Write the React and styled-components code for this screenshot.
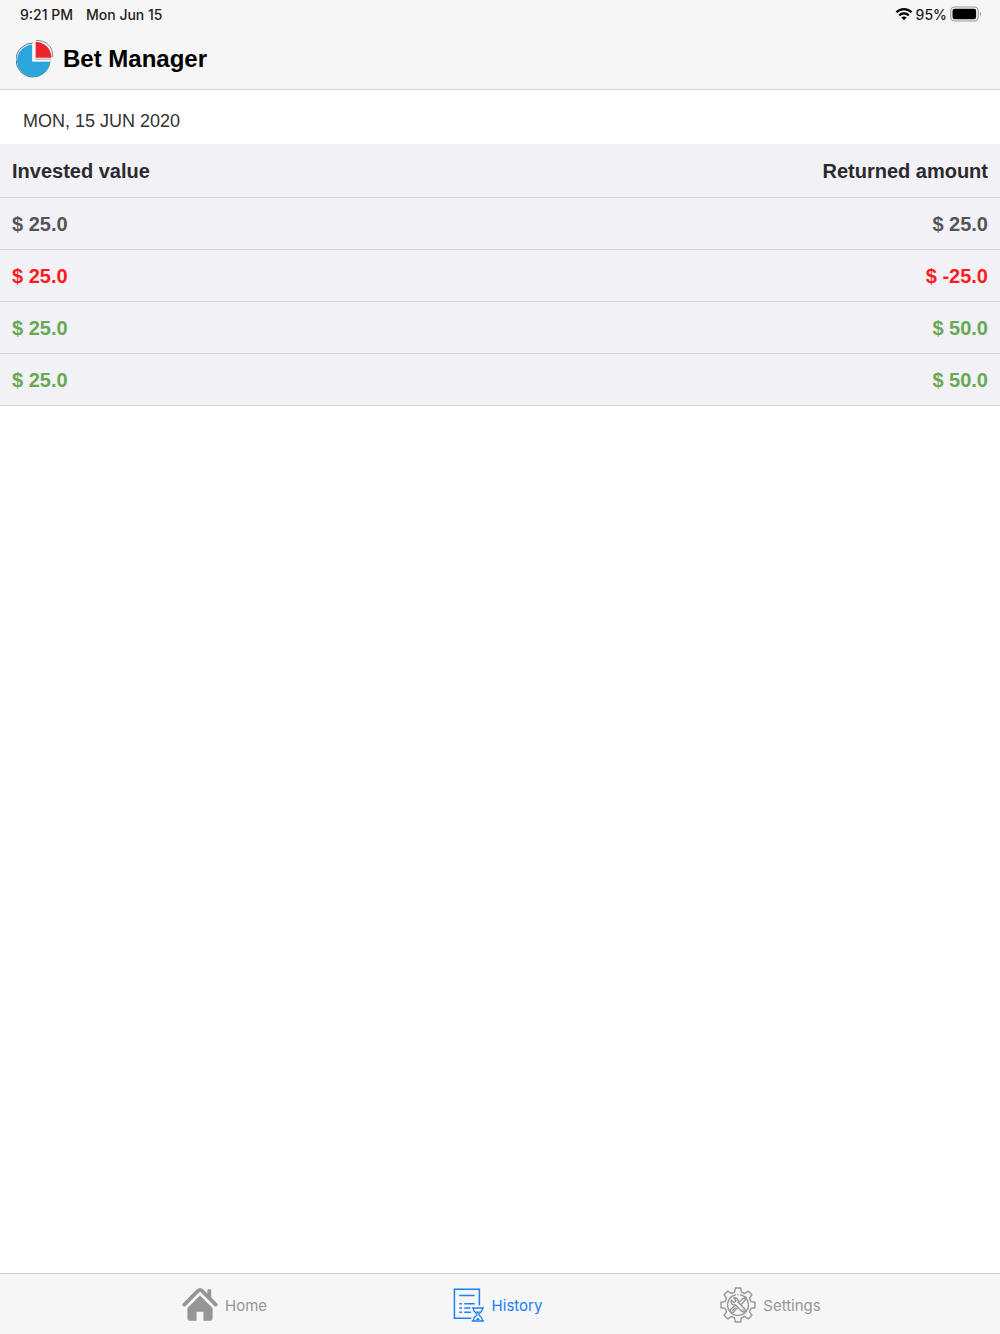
import React from 'react'
import styled, { createGlobalStyle } from 'styled-components';

const GlobalStyle = createGlobalStyle`
  * {
    box-sizing: border-box;
  }

  body {
    margin: 0;
    background: #ffffff;
    font-family: "Liberation Sans", Arial, sans-serif;
  }
`

const Page = styled.div`
  display: flex;
  flex-direction: column;
  min-height: 100vh;
`

const Header = styled.header`
  background: #f6f6f6;
  border-bottom: 1px solid #cfcdd0;
`

const StatusBar = styled.div`
  display: flex;
  justify-content: space-between;
  align-items: center;
  height: 28px;
  padding: 0 18px 0 20px;
  color: #1c1c1c;
  font-family: Inter, sans-serif;
  font-size: 14px;
  font-weight: 500;
`

const StatusGroup = styled.div`
  display: flex;
  align-items: center;
  gap: ${props => props.$gap}px;
`

const Brand = styled.div`
  display: flex;
  align-items: center;
  gap: 8px;
  height: 61px;
  padding: 0 16px;
`

const Title = styled.h1`
  margin: 0;
  color: #000000;
  font-size: 24px;
  line-height: 28px;
`

const Main = styled.main`
  flex: 1;
`

const DateHeading = styled.h2`
  margin: 0;
  padding: 19px 23px 11px;
  color: #333333;
  font-size: 18px;
  font-weight: 400;
  line-height: 24px;
  text-transform: uppercase;
`

const BetTable = styled.table`
  width: 100%;
  border-collapse: collapse;
  background: #f2f1f6;
  font-size: 20px;
  font-weight: 700;
  line-height: 24px;
`

const rowColors = {
  header: '#2b2b2d',
  even: '#555555',
  lost: '#fb1c20',
  won: '#68a953',
}

const Row = styled.tr`
  height: ${props => props.$kind === 'header' ? 53 : 52}px;
  color: ${props => rowColors[props.$kind]};
  border-bottom: 1px solid #d5d4d9;

  th, td {
    padding: 1px 12px 0;
    text-align: left;
  }

  th:last-child, td:last-child {
    text-align: right;
  }
`

const TabBar = styled.nav`
  display: flex;
  justify-content: center;
  height: 61px;
  padding-right: 5px;
  background: #f6f6f6;
  border-top: 1px solid #cfcdd0;
`

const Tab = styled.a`
  display: flex;
  flex: 0 1 273px;
  justify-content: center;
  align-items: center;
  gap: 7px;
  padding-top: 2px;
  color: ${props => props.$active ? '#1b7ff5' : '#969696'};
  font-family: Inter, sans-serif;
  font-size: 15px;
  text-decoration: none;
`

const WifiIcon = () => (
  <svg width="18" height="14" viewBox="0 0 18 14" fill="none" stroke="#000000" strokeWidth="2.2" aria-hidden="true">
    <path d="M1.4 5.3C5.6 1 12.4 1 16.6 5.3" />
    <path d="M4.2 8.4C6.9 5.7 11.1 5.7 13.8 8.4" />
    <path d="M6.4 10.6C7.9 9.2 10.1 9.2 11.6 10.6L9 13.2Z" fill="#000000" stroke="none" />
  </svg>
)

const BatteryIcon = () => (
  <svg width="32" height="16" viewBox="0 0 32 16" aria-hidden="true">
    <rect x="0.8" y="1" width="27.4" height="14" rx="4" fill="none" stroke="#999999" strokeWidth="1.1" />
    <rect x="2.5" y="2.8" width="23.6" height="10.4" rx="2.2" fill="#000000" />
    <path d="M30 5.8C31.6 6.6 31.6 9.4 30 10.2Z" fill="#999999" />
  </svg>
)

const Logo = () => (
  <svg width="39" height="40" viewBox="0 0 39 40" aria-hidden="true">
    <path d="M17 4A17 17 0 1 0 34 22" fill="none" stroke="#46636f" strokeWidth="0.9" />
    <path d="M17.2 5.4A16.3 16.3 0 1 0 33.6 22.2H17.2Z" fill="#2ca5df" />
    <path d="M17.2 4.5V21.6H34" fill="none" stroke="#ffffff" strokeWidth="2" />
    <path d="M19 20.2H35" stroke="#a5a5a5" strokeWidth="1" />
    <path d="M20 1.6C29 .8 36 7 36.6 14.5V18" fill="none" stroke="#777777" strokeWidth="0.9" />
    <path d="M19.6 3C28.5 2.8 35.3 9.7 35.5 18.8H19.6Z" fill="#ea252b" />
  </svg>
)

const HomeIcon = () => (
  <svg width="36" height="34" viewBox="0 0 36 34" fill="currentColor" aria-hidden="true">
    <path d="M2.3 16.6L15.6 3.2Q18 1 20.4 3.2L33.7 16.6" fill="none" stroke="currentColor" strokeWidth="3.8" strokeLinecap="round" />
    <path d="M25.4 2Q25.4 1.3 26.1 1.3H28.5Q29.2 1.3 29.2 2V12L25.4 8.2Z" />
    <path d="M18 7.6L30.6 20V30.4Q30.6 32.8 28.2 32.8H21.4V23.7H14.6V32.8H7.8Q5.4 32.8 5.4 30.4V20Z" />
  </svg>
)

const HistoryIcon = () => (
  <svg width="32" height="34" viewBox="0 0 32 34" fill="none" stroke="currentColor" strokeWidth="1.5" aria-hidden="true">
    <path d="M18.3 30.2H1.4V1.2H26.4V17.5" />
    <path d="M6.3 7.4H21.7M6.3 15.7H9M11.3 15.7H21.7M6.3 20H9M11.3 20H17.3M6.3 24.3H9M11.3 24.3H18" />
    <path d="M18.8 20H31M18.8 33H31" />
    <path d="M20.6 20V21.8C20.6 24.2 24 25 24 26.5S20.6 28.8 20.6 31.2V33M29.2 20V21.8C29.2 24.2 25.8 25 25.8 26.5S29.2 28.8 29.2 31.2V33" strokeWidth="1.3" />
    <path d="M22.4 23.4H27.4L24.9 25.7ZM22.8 32L24.9 29.4L27 32Z" fill="currentColor" stroke="none" />
  </svg>
)

const SettingsIcon = () => (
  <svg width="36" height="36" viewBox="0 0 36 36" fill="none" stroke="currentColor" strokeWidth="1.4" strokeLinejoin="round" aria-hidden="true">
    <path d="M15.3 1H20.7L21.4 5.1L24.8 6.5L28.2 4.1L31.9 7.8L29.5 11.2L30.9 14.6L35 15.3V20.7L30.9 21.4L29.5 24.8L31.9 28.2L28.2 31.9L24.8 29.5L21.4 30.9L20.7 35H15.3L14.6 30.9L11.2 29.5L7.8 31.9L4.1 28.2L6.5 24.8L5.1 21.4L1 20.7V15.3L5.1 14.6L6.5 11.2L4.1 7.8L7.8 4.1L11.2 6.5L14.6 5.1Z" />
    <path d="M20.2 7.8A10.4 10.4 0 1 1 15.8 7.8" />
    <path d="M17.3 7.6H18.7" />
    <path d="M11.4 13.2L14.2 15.6L16.1 13.6L13.7 10.9C16.5 10.3 18.7 12.3 18 15.1L24.7 21.8C26.4 23.8 24 26 22 24.4L15.2 17.7C12.2 18.5 10.1 15.9 11.4 13.2Z" />
    <path d="M18.6 15.4L22.9 11.6L26.2 10.2L24.8 13.5L20.8 17.7M17.3 20.9L13.3 25.4C11.5 26.4 9.5 24.4 10.6 22.6L15 18.4" />
    <path d="M12.3 23.7L15.6 20.4M22.5 22.4L23.5 23.4" />
  </svg>
)

const bets = [
  { invested: '25.0', returned: '25.0', kind: 'even' },
  { invested: '25.0', returned: '-25.0', kind: 'lost' },
  { invested: '25.0', returned: '50.0', kind: 'won' },
  { invested: '25.0', returned: '50.0', kind: 'won' },
]

const tabs = [
  { name: 'Home', icon: HomeIcon },
  { name: 'History', icon: HistoryIcon },
  { name: 'Settings', icon: SettingsIcon },
]

export default function App() {
  const activeTab = 'History';

  return (
    <Page>
      <GlobalStyle />
      <Header>
        <StatusBar>
          <StatusGroup $gap={13}>
            <span>9:21 PM</span>
            <span>Mon Jun 15</span>
          </StatusGroup>
          <StatusGroup $gap={3}>
            <WifiIcon />
            <span>95%</span>
            <BatteryIcon />
          </StatusGroup>
        </StatusBar>
        <Brand>
          <Logo />
          <Title>Bet Manager</Title>
        </Brand>
      </Header>
      <Main>
        <DateHeading>Mon, 15 Jun 2020</DateHeading>
        <BetTable>
          <thead>
            <Row $kind="header">
              <th scope="col">Invested value</th>
              <th scope="col">Returned amount</th>
            </Row>
          </thead>
          <tbody>
            {bets.map((bet, index) => (
              <Row key={index} $kind={bet.kind}>
                <td>$ {bet.invested}</td>
                <td>$ {bet.returned}</td>
              </Row>
            ))}
          </tbody>
        </BetTable>
      </Main>
      <TabBar>
        {tabs.map(({ name, icon: Icon }) => (
          <Tab
            key={name}
            href={`#${name.toLowerCase()}`}
            $active={name === activeTab}
            aria-current={name === activeTab ? 'page' : undefined}>
            <Icon />
            <span>{name}</span>
          </Tab>
        ))}
      </TabBar>
    </Page>
  )
}
